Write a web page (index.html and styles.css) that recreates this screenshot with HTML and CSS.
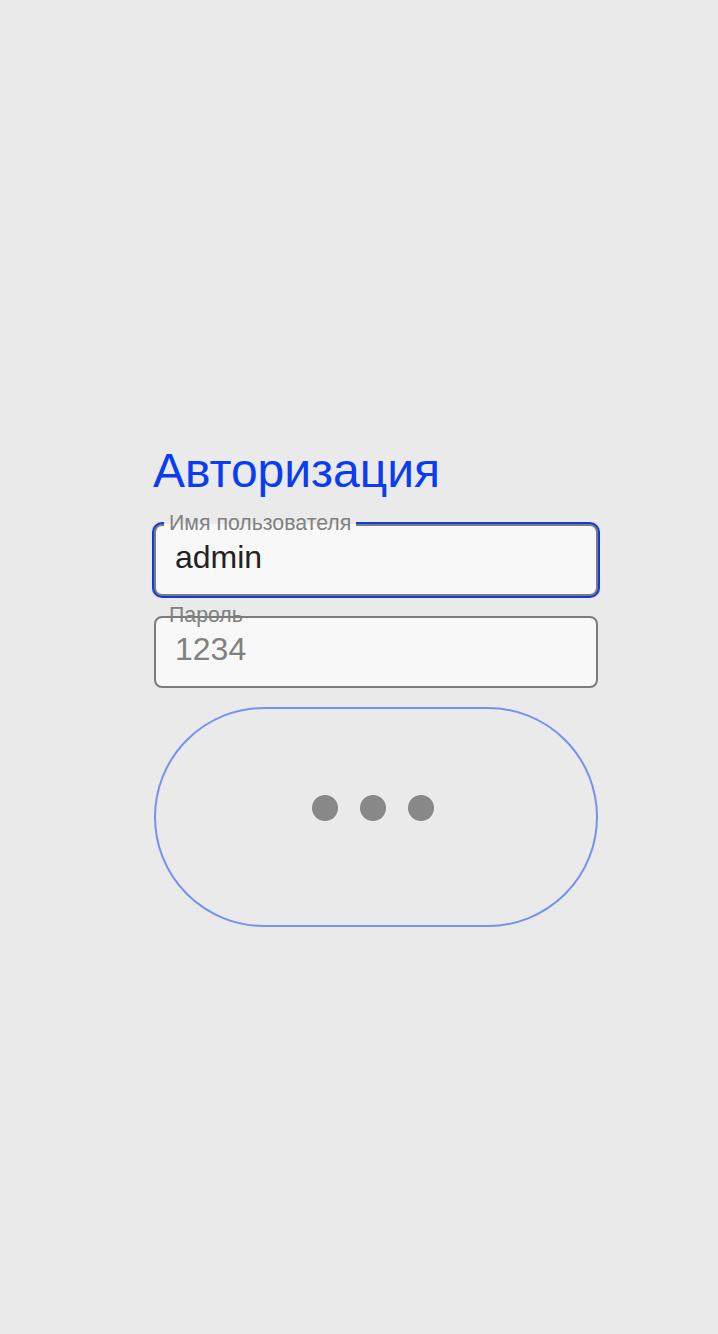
FILE: index.html
```html
<!DOCTYPE html>
<html lang="ru">
<head>
<meta charset="utf-8">
<title>Авторизация</title>
<link rel="stylesheet" href="styles.css">
</head>
<body>
<main class="page">
  <form class="login">
    <h1 class="title">Авторизация</h1>
    <div class="field field-focused">
      <span class="label label-filled">Имя пользователя</span>
      <input class="input" type="text" value="admin">
    </div>
    <div class="field">
      <span class="label">Пароль</span>
      <input class="input" type="text" placeholder="1234">
    </div>
    <button class="submit" type="button">
      <span class="dot"></span><span class="dot"></span><span class="dot"></span>
    </button>
  </form>
</main>
</body>
</html>
```
FILE: styles.css
```css
html, body {
  margin: 0;
  padding: 0;
  background: #eaeaea;
}
body {
  font-family: "Liberation Sans", Arial, sans-serif;
  min-height: 1334px;
}
.page {
  padding: 443px 120px 0 154px;
}
.login {
  display: flex;
  flex-direction: column;
  width: 444px;
}
.title {
  margin: 0 0 25px -1px;
  font-size: 48px;
  line-height: 56px;
  font-weight: 400;
  color: #0a3cf2;
}
.field {
  position: relative;
  height: 72px;
  box-sizing: border-box;
  border: 2px solid #7c7c7c;
  border-radius: 8px;
  background: #f8f8f8;
  margin-bottom: 20px;
}
.field-focused {
  box-shadow: 0 0 0 2px #0a3ce8;
}
.label {
  position: absolute;
  left: 8px;
  top: -13px;
  padding: 0 5px;
  font-size: 21.3px;
  line-height: 21px;
  color: #808080;
}
.label-filled {
  background: linear-gradient(to bottom, #eaeaea 0, #eaeaea 11px, #f8f8f8 11px, #f8f8f8 100%);
}
.input {
  display: block;
  width: 100%;
  height: 100%;
  box-sizing: border-box;
  border: 0;
  outline: none;
  background: transparent;
  padding: 0 19px 5px;
  font-family: "Liberation Sans", Arial, sans-serif;
  font-size: 32px;
  color: #222222;
}
.input::placeholder {
  color: #808080;
  opacity: 1;
}
.submit {
  margin-top: -1px;
  height: 220px;
  box-sizing: border-box;
  border: 2px solid #7393ee;
  border-radius: 110px;
  background: #eaeaea;
  display: flex;
  align-items: center;
  justify-content: center;
  gap: 22px;
  padding: 0 6px 18px 0;
}
.dot {
  width: 26px;
  height: 26px;
  border-radius: 50%;
  background: #888888;
}
```
